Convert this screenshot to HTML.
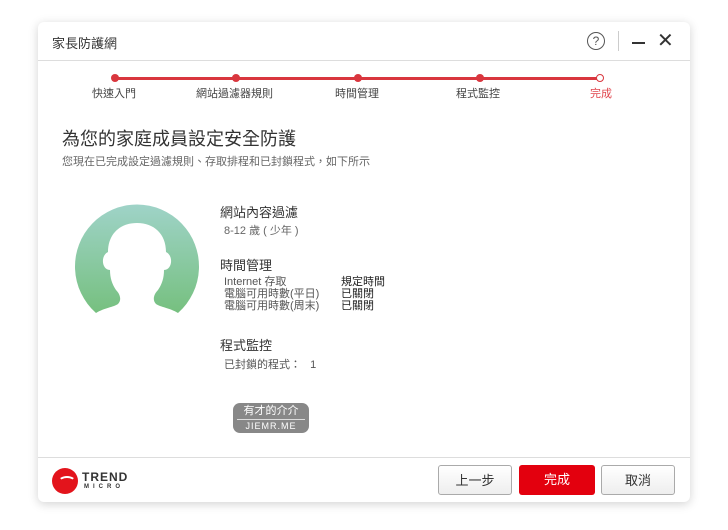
<!DOCTYPE html><html><head><meta charset="utf-8"><style>
body{margin:0;width:728px;height:530px;background:#fff;font-family:"Liberation Sans","Noto Sans CJK TC",sans-serif;position:relative;overflow:hidden}
.win{position:absolute;left:38px;top:22px;width:652px;height:480px;background:#fff;border-radius:6px;box-shadow:0 2px 10px rgba(0,0,0,.18)}
.a{position:absolute;white-space:nowrap}
.btn{position:absolute;top:443px;height:30px;width:74px;border-radius:3px;font-size:13px;text-align:center;line-height:30px;box-sizing:border-box}
</style></head><body>
<div class="win">
<div class="a" style="left:14px;top:11px;font-size:13px;color:#333">家長防護網</div>
<div class="a" style="left:549px;top:10px;width:16px;height:16px;border:1.5px solid #555;border-radius:50%;font-size:12px;text-align:center;line-height:16px;color:#555">?</div>
<div class="a" style="left:580px;top:9px;width:1px;height:20px;background:#ccc"></div>
<div class="a" style="left:594px;top:20px;width:13px;height:2px;background:#333"></div>
<div class="a" style="left:619px;top:6px;font-size:20px;color:#333">✕</div>
<div class="a" style="left:0;top:38px;width:652px;height:1px;background:#ddd"></div>
<div class="a" style="left:78px;top:55px;width:484px;height:3px;background:#d9363e"></div>
<div class="a" style="left:73px;top:52px;width:8px;height:8px;border-radius:50%;background:#d9363e"></div>
<div class="a" style="left:194px;top:52px;width:8px;height:8px;border-radius:50%;background:#d9363e"></div>
<div class="a" style="left:316px;top:52px;width:8px;height:8px;border-radius:50%;background:#d9363e"></div>
<div class="a" style="left:438px;top:52px;width:8px;height:8px;border-radius:50%;background:#d9363e"></div>
<div class="a" style="left:558px;top:52px;width:6px;height:6px;border-radius:50%;background:#fff;border:1px solid #d9363e"></div>
<div class="a" style="left:54px;top:63px;font-size:11px;color:#444">快速入門</div>
<div class="a" style="left:158px;top:63px;font-size:11px;color:#444">網站過濾器規則</div>
<div class="a" style="left:297px;top:63px;font-size:11px;color:#444">時間管理</div>
<div class="a" style="left:418px;top:63px;font-size:11px;color:#444">程式監控</div>
<div class="a" style="left:552px;top:63px;font-size:11px;color:#e0464d">完成</div>
<div class="a" style="left:24px;top:103px;font-size:18px;color:#333">為您的家庭成員設定安全防護</div>
<div class="a" style="left:24px;top:131px;font-size:11px;color:#666">您現在已完成設定過濾規則、存取排程和已封鎖程式，如下所示</div>
<svg class="a" style="left:36px;top:178px" width="126" height="116" viewBox="0 0 126 116">
<defs><linearGradient id="g" x1="0" y1="0" x2="0" y2="1"><stop offset="0" stop-color="#9fd3c8"/><stop offset="1" stop-color="#76c07f"/></linearGradient></defs>
<path d="M22 113 A62 62 0 1 1 104 113 C96 108 86 107 82 104 C78 100 80 94 84 90 C88 84 90 78 90 70 C98 70 100 56 92 52 C92 34 80 23 63 23 C46 23 34 34 34 52 C26 56 28 70 36 70 C36 78 38 84 42 90 C46 94 48 100 44 104 C40 107 30 108 22 113 Z" fill="url(#g)"/>
</svg>
<div class="a" style="left:182px;top:180px;font-size:13px;color:#333">網站內容過濾</div>
<div class="a" style="left:186px;top:200px;font-size:11px;color:#666">8-12 歲 ( 少年 )</div>
<div class="a" style="left:182px;top:233px;font-size:13px;color:#333">時間管理</div>
<div class="a" style="left:186px;top:254px;font-size:11px;color:#555;line-height:12px">Internet 存取<br>電腦可用時數(平日)<br>電腦可用時數(周末)</div>
<div class="a" style="left:303px;top:254px;font-size:11px;color:#222;line-height:12px">規定時間<br>已關閉<br>已關閉</div>
<div class="a" style="left:182px;top:313px;font-size:13px;color:#333">程式監控</div>
<div class="a" style="left:186px;top:334px;font-size:11px;color:#555">已封鎖的程式：&nbsp;&nbsp;&nbsp;1</div>
<div class="a" style="left:195px;top:381px;width:76px;height:30px;border-radius:7px;background:#888;color:#fff;text-align:center;font-size:11px;line-height:13px"><div style="margin-top:2px">有才的介介</div><div style="border-top:1px solid #ddd;margin:1px 4px 0;font-size:9px;letter-spacing:1px">JIEMR.ME</div></div>
<div class="a" style="left:0;top:435px;width:652px;height:1px;background:#ddd"></div>
<div class="a" style="left:14px;top:446px;width:26px;height:26px;border-radius:50%;background:#e3141c"></div>
<div class="a" style="left:20px;top:454px;width:14px;height:8px;border-radius:50%;border:2px solid #fff;border-color:#fff transparent transparent transparent"></div>
<div class="a" style="left:44px;top:448px;font-size:12px;font-weight:bold;color:#333;letter-spacing:1px">TREND</div>
<div class="a" style="left:46px;top:462px;font-size:6px;font-weight:bold;color:#333;letter-spacing:4px">MICRO</div>
<div class="btn" style="left:400px;border:1px solid #aaa;background:linear-gradient(#fff,#eee);color:#333">上一步</div>
<div class="btn" style="left:481px;width:76px;background:#e3000e;color:#fff">完成</div>
<div class="btn" style="left:563px;border:1px solid #aaa;background:linear-gradient(#fff,#eee);color:#333">取消</div>
</div>
</body></html>
